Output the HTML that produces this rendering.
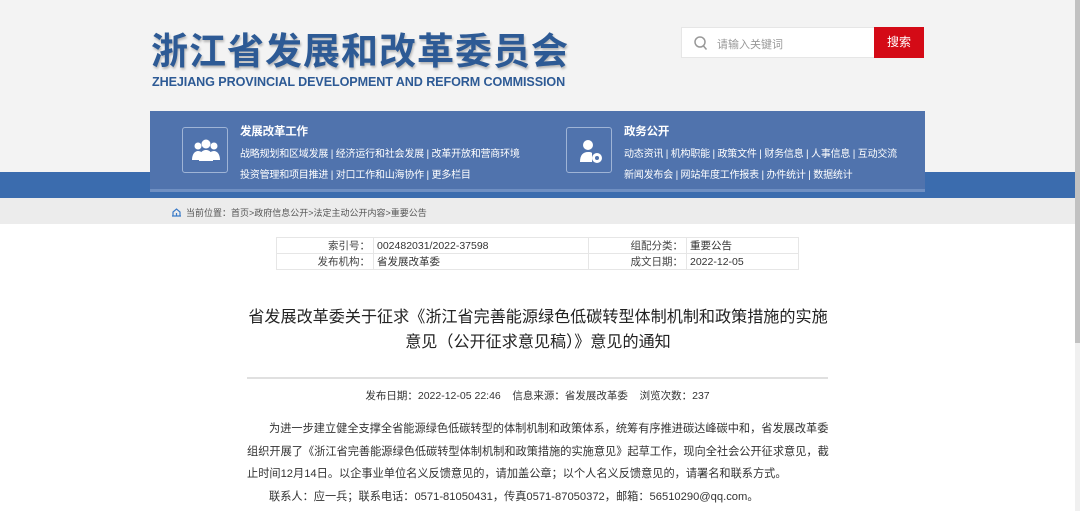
<!DOCTYPE html>
<html><head><meta charset="utf-8"><style>
*{margin:0;padding:0;box-sizing:border-box}
body{width:1080px;height:511px;overflow:hidden;background:#fff;font-family:"Liberation Sans","Noto Sans CJK SC",sans-serif;position:relative;color:#333}
.hdr{position:absolute;left:0;top:0;width:1075px;height:198px;background:#f3f3f3}
.band{position:absolute;left:0;top:172px;width:1075px;height:26px;background:#3b6cae}
.crumb{position:absolute;left:0;top:198px;width:1075px;height:26px;background:#ececec}
.logo{position:absolute;left:151px;top:21px;font-size:37px;font-weight:bold;color:#2d5a95;letter-spacing:1px;text-shadow:1px 2px 2px rgba(0,0,0,.25);white-space:nowrap}
.en{position:absolute;left:152px;top:75px;font-size:12.6px;font-weight:bold;color:#2d5a95;white-space:nowrap;letter-spacing:-.1px}
.search{position:absolute;left:681px;top:27px;width:194px;height:31px;background:#fff;border:1px solid #e6e6e6}
.search span{position:absolute;left:35px;top:8px;font-size:11px;color:#999}
.btn{position:absolute;left:874px;top:27px;width:50px;height:31px;background:#d40a16;color:#fff;font-size:12px;text-align:center;line-height:31px}
.nav{position:absolute;left:150px;top:111px;width:775px;height:78px;background:#5073ad;box-shadow:0 3px 0 #6f8fc2}
.ico{position:absolute;width:46px;height:46px;border:1px solid #9fb4d6;border-radius:3px}
.nt{position:absolute;color:#fff;font-size:10px;white-space:nowrap;letter-spacing:-.2px}
.nt b{font-size:11.5px}
.sb{position:absolute;left:1075px;top:0;width:5px;height:511px;background:#f0f0f0}
.sb i{position:absolute;left:0;top:0;width:5px;height:343px;background:#c1c1c1}
table{position:absolute;left:276px;top:237px;width:523px;border-collapse:collapse;font-size:10.5px}
td{border:1px solid #e6e6e6;height:16px;padding:0 3px}
.l{text-align:right;color:#444}
h1{position:absolute;left:200px;top:305px;width:676px;font-size:16.1px;font-weight:normal;text-align:center;line-height:25px;color:#222;white-space:nowrap}
.hr{position:absolute;left:247px;top:377px;width:581px;height:2px;background:#e0e0e0}
.meta{position:absolute;left:247px;top:388px;width:581px;text-align:center;font-size:10.5px;color:#333}
.body{position:absolute;left:247px;top:418px;width:600px;font-size:11.2px;line-height:22.7px;color:#333;white-space:nowrap}
</style></head><body>
<div class="hdr"></div>
<div class="band"></div>
<div class="crumb"></div>
<div class="logo">浙江省发展和改革委员会</div>
<div class="en">ZHEJIANG PROVINCIAL DEVELOPMENT AND REFORM COMMISSION</div>
<div class="search"><svg style="position:absolute;left:12px;top:8px" width="14" height="15" viewBox="0 0 14 15"><circle cx="6" cy="6" r="5" fill="none" stroke="#999" stroke-width="1.5"/><path d="M9.5 10l3 3.5" stroke="#999" stroke-width="1.5"/></svg><span>请输入关键词</span></div>
<div class="btn">搜索</div>
<div class="nav"></div>
<div class="ico" style="left:182px;top:127px"><svg width="46" height="46" viewBox="0 0 46 46"><g fill="#fff"><circle cx="15" cy="18" r="3.5"/><circle cx="31" cy="18" r="3.5"/><circle cx="23" cy="16" r="4.5"/><path d="M9 32c0-6 3-9 6-9s5 2 5 4v5z"/><path d="M37 32c0-6-3-9-6-9s-5 2-5 4v5z"/><path d="M16 33c0-8 3-11 7-11s7 3 7 11z"/></g></svg></div>
<div class="nt" style="left:240px;top:123px"><b>发展改革工作</b></div>
<div class="nt" style="left:240px;top:145px">战略规划和区域发展 | 经济运行和社会发展 | 改革开放和营商环境</div>
<div class="nt" style="left:240px;top:166px">投资管理和项目推进 | 对口工作和山海协作 | 更多栏目</div>
<div class="ico" style="left:566px;top:127px"><svg width="46" height="46" viewBox="0 0 46 46"><g fill="#fff"><circle cx="21" cy="17" r="5"/><path d="M13 34c0-7 3-10 8-10 2 0 3 0 4 1v9z"/><circle cx="30" cy="30" r="5"/></g><circle cx="30" cy="30" r="2" fill="#5073ad"/></svg></div>
<div class="nt" style="left:624px;top:123px"><b>政务公开</b></div>
<div class="nt" style="left:624px;top:145px">动态资讯 | 机构职能 | 政策文件 | 财务信息 | 人事信息 | 互动交流</div>
<div class="nt" style="left:624px;top:166px">新闻发布会 | 网站年度工作报表 | 办件统计 | 数据统计</div>
<svg style="position:absolute;left:171px;top:207px" width="11" height="10" viewBox="0 0 11 10"><path d="M1 9h9M2 9V5l3.5-3 3.5 3v4M5.5 9V6" fill="none" stroke="#3b7bc8" stroke-width="1.2"/></svg>
<div style="position:absolute;left:186px;top:206px;font-size:9px;color:#555">当前位置：首页&gt;政府信息公开&gt;法定主动公开内容&gt;重要公告</div>
<table>
<tr><td class="l" style="width:97px">索引号：</td><td style="width:215px">002482031/2022-37598</td><td class="l" style="width:98px">组配分类：</td><td>重要公告</td></tr>
<tr><td class="l">发布机构：</td><td>省发展改革委</td><td class="l">成文日期：</td><td>2022-12-05</td></tr>
</table>
<h1>省发展改革委关于征求《浙江省完善能源绿色低碳转型体制机制和政策措施的实施<br>意见（公开征求意见稿）》意见的通知</h1>
<div class="hr"></div>
<div class="meta">发布日期：2022-12-05 22:46&nbsp;&nbsp;&nbsp;&nbsp;信息来源：省发展改革委&nbsp;&nbsp;&nbsp;&nbsp;浏览次数：237</div>
<div class="body"><span style="padding-left:22px">为进一步建立健全支撑全省能源绿色低碳转型的体制机制和政策体系，统筹有序推进碳达峰碳中和，省发展改革委</span><br>组织开展了《浙江省完善能源绿色低碳转型体制机制和政策措施的实施意见》起草工作，现向全社会公开征求意见，截<br>止时间12月14日。以企事业单位名义反馈意见的，请加盖公章；以个人名义反馈意见的，请署名和联系方式。<br><span style="padding-left:22px">联系人：应一兵；联系电话：0571-81050431，传真0571-87050372，邮箱：56510290@qq.com。</span></div>
<div class="sb"><i></i></div>
</body></html>
